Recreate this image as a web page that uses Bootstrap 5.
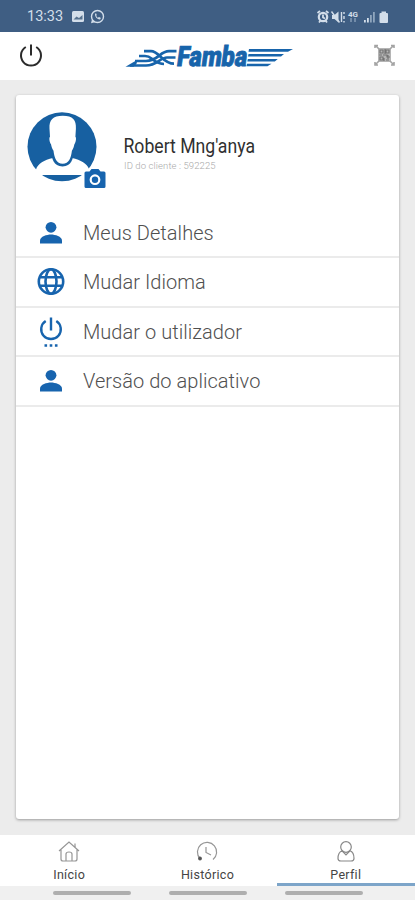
<!DOCTYPE html>
<html lang="pt">
<head>
<meta charset="utf-8">
<meta name="viewport" content="width=device-width, initial-scale=1">
<title>Famba - Perfil</title>
<link href="https://cdn.jsdelivr.net/npm/bootstrap@5.3.0/dist/css/bootstrap.min.css" rel="stylesheet">
<style>
body{font-family:Roboto,"Liberation Sans",sans-serif;height:900px;overflow:hidden;background:#ececec}
svg{display:block;flex:none;overflow:visible}
.status-bar{height:32px;background:#3f5e83;color:#d3deea;font-size:14.5px;padding:1px 25px 0 27px}
.status-time{width:44px;line-height:32px}
.app-header{height:48px;padding:0 19px}
.page-main{padding:15px 16px 16px;min-height:0}
.profile-card{border:0;border-radius:3px;box-shadow:0 1px 3px rgba(0,0,0,.35)}
.profile-head{height:113.500px;padding:16px 0 0 10px}
.client-id{font-size:9.5px;line-height:12px;color:#a8a8a8;font-weight:300;margin-top:2px;letter-spacing:.1px}
.menu-row{height:49.5px;padding:1px 0 0 20px;border:0;border-bottom:2px solid #ebebeb!important;border-radius:0!important;background:transparent}
.menu-label{font-size:20px;font-weight:300;color:#505050;margin-left:17px;letter-spacing:.04px;white-space:nowrap}
.tab-bar{height:51px}
.tab-item{padding-top:5px;color:#444;font-size:12.5px;line-height:17px;letter-spacing:.3px}
.tab-item.current{box-shadow:inset 0 -3px #7da5c9}
.tab-item svg{margin-bottom:2px}
.gesture-bar{height:14px;background:#f0f0f0;padding:5px 52px 0 53px}
.gesture-bar span{width:78px;height:4px;border-radius:2px;background:#afafaf}
</style>
</head>
<body class="d-flex flex-column">
<header class="status-bar d-flex align-items-center">
  <span class="status-time">13:33</span>
  <svg width="34" height="16" viewBox="0 0 34 16">
    <rect x="1" y="2" width="12" height="11" rx="1.500" fill="#d3deea"/><path d="M2.500 10.500l3-3 2.500 1.500 3.500-3v4.500z" fill="#57728f"/>
    <circle cx="26.500" cy="7.500" r="6" fill="none" stroke="#d3deea" stroke-width="1.400"/><path d="M20 14.300l1-4 3 3z" fill="#d3deea"/><path d="M24.200 4.500c-1 3 3 7 5.500 5.600l-.3-1.600-1.700-.5-.8.900-1.700-2 .5-.9-.5-1.600z" fill="#d3deea"/>
  </svg>
  <svg class="ms-auto" width="74" height="16" viewBox="0 0 74 16" fill="#d3deea">
    <circle cx="7" cy="8" r="4.200" fill="none" stroke="#d3deea" stroke-width="2.200"/><path d="M7 5.500v3l2 1M1.500 4l2.500-2M12.500 4l-2.500-2M3 13.500l1.500-2M11 13.500l-1.500-2" fill="none" stroke="#d3deea" stroke-width="1.800"/>
    <path d="M16 6h2.500L22.500 2.500v11L18.500 10H16z"/><path d="M15.500 2.500l8 11M25.500 3v10M28 3v2m0 2v3m0 2v1.500" stroke="#d3deea" stroke-width="1.400"/>
    <text x="32" y="7.500" font-size="8" font-weight="700" textLength="10">4G</text><path d="M35 9v4M39 9v4" stroke="#8fa5bd" stroke-width="1.300"/>
    <path d="M48 11h1.800v2.500H48zM51 9h1.800v4.500H51z"/><path d="M54 6h1.800v7.500H54zM57 3h1.800v10.500H57z" fill="#8fa5bd"/>
    <rect x="63.500" y="4" width="8.500" height="10" rx="1"/><rect x="65.500" y="2.500" width="4.500" height="2"/>
  </svg>
</header>
<nav class="app-header bg-white d-flex align-items-center justify-content-between">
  <svg width="24" height="24" viewBox="0 0 24 24" fill="none" stroke="#2b2b2b" stroke-width="2"><path d="M12 .5v11M6.800 3a10 10 0 1 0 10.400 0"/></svg>
  <svg width="168" height="26" viewBox="123 43 168 26">
    <g fill="none" stroke="#1764ab" stroke-width="2.700">
      <path d="M143 51.200h7c8 0 12 12.500 23 12.500"/>
      <path d="M138 56h6c5 0 6 2.500 9 4.500s6 3.500 10 3.500"/>
      <path d="M134 61h11c12 0 14-9.800 23-9.800h7.500"/>
      <path d="M129 65.500h16c11 0 14-8 21-8h8.500"/>
    </g>
    <path d="M124.500 66.800l12-7-1 4-3 3z" fill="#1764ab"/>
    <text transform="translate(175 66) skewX(-8)" x="0" y="0" font-size="28" font-weight="900" fill="#1764ab" stroke="#1764ab" stroke-width=".9" textLength="70" lengthAdjust="spacingAndGlyphs">Famba</text>
    <path d="M249.500 49h44l-5 2.700h-39.500zM249 54h35.500l-3 2.600h-33zM248.300 59h30l-3 2.600h-27.500zM247.500 63.700h24.500l-4 2.600h-21z" transform="translate(-1.500 0)" fill="#1764ab"/>
  </svg>
  <svg width="23" height="24" viewBox="0 0 23 24" fill="none" stroke="#888"><path d="M5 4h13v14H5z" fill="#b5b5b5" stroke="none"/><path d="M7 6h3v3H7zM13 6h3v3h-3zM7 13h3v3H7zM10 11h4v2h3M13 16h3M12 5v5M6 11h3M15 11v4M11 14v3" stroke="#737373" stroke-width="1.200"/><path d="M2 4V1.500h3M18 1.500h3V4M2 18v3h3M18 21h3v-3M3 2l3 3M20 2l-3 3M3 20l3-3M20 20l-3-3" stroke-width="1.600" stroke="#a3a3a3"/></svg>
</nav>
<main class="page-main flex-grow-1 d-flex flex-column">
  <section class="profile-card card flex-grow-1">
    <div class="profile-head d-flex">
      <svg width="82" height="80" viewBox="26 111 82 80">
        <circle cx="62" cy="146.800" r="34.500" fill="#1760a1"/>
        <path d="M26 169.500h10c2-6 8-9.500 17-11.500h19c9 2 15 5.500 17 11l9 .500v5.500H26z" fill="#fff"/>
        <path d="M51.500 152c0 6 2 14.500 11 14.500s11-8.500 11-14.500z" fill="#1760a1"/>
        <path d="M62.800 115.800c-10 0-13.800 4-13.300 13l.5 8c-1.300 1-.3 6 1 7.500.5 2.500 1.200 4.500 2.500 6.500.8 7 3 13 9.200 13s8.400-6 9.200-13c1.300-2 2-4 2.500-6.500 1.300-1.500 2.300-6.500 1-7.500l.5-8c.5-9-3.100-13-13.100-13z" fill="#fff"/>
        <path d="M84.500 173q0-1.500 1.500-1.500h3.500l2-2.500h7l2 2.500h3.500q1.500 0 1.500 1.500v13.500q0 1.500-1.500 1.500h-18q-1.500 0-1.500-1.500z" fill="#1764ae"/>
        <circle cx="95" cy="179.700" r="4.300" fill="none" stroke="#fff" stroke-width="2.200"/>
      </svg>
      <div class="ms-3">
        <svg width="140" height="47" viewBox="124 111 140 47"><text x="123.500" y="152.500" font-size="20" fill="#303030" textLength="131.500" lengthAdjust="spacingAndGlyphs">Robert Mng'anya</text></svg>
        <div class="client-id">ID do cliente : 592225</div>
      </div>
    </div>
    <div class="list-group list-group-flush">
      <div class="menu-row list-group-item d-flex align-items-center">
        <svg width="30" height="30" viewBox="0 0 30 30" fill="#1764ae"><circle cx="15" cy="9.300" r="5.400"/><path d="M4 25.500v-3c0-4 7-6 11-6s11 2 11 6v3z"/></svg>
        <span class="menu-label">Meus Detalhes</span>
      </div>
      <div class="menu-row list-group-item d-flex align-items-center">
        <svg width="30" height="30" viewBox="0 0 30 30" fill="none" stroke="#1764ae" stroke-width="2.600"><circle cx="15" cy="14.500" r="12.200"/><ellipse cx="15" cy="14.500" rx="5.500" ry="12.200"/><path d="M4 10.200h22M4 18.800h22"/></svg>
        <span class="menu-label">Mudar Idioma</span>
      </div>
      <div class="menu-row list-group-item d-flex align-items-center">
        <svg width="30" height="30" viewBox="0 0 30 30" fill="none" stroke="#1764ae" stroke-width="2.400"><path d="M15 .5v13M9.700 4a9.800 9.800 0 1 0 10.600 0"/><path d="M8.500 28.500h2.600M13.700 28.500h2.600M18.900 28.500h2.600" stroke-width="2.600"/></svg>
        <span class="menu-label">Mudar o utilizador</span>
      </div>
      <div class="menu-row list-group-item d-flex align-items-center">
        <svg width="30" height="30" viewBox="0 0 30 30" fill="#1764ae"><circle cx="15" cy="9.300" r="5.400"/><path d="M4 25.500v-3c0-4 7-6 11-6s11 2 11 6v3z"/></svg>
        <span class="menu-label">Versão do aplicativo</span>
      </div>
    </div>
  </section>
</main>
<nav class="tab-bar row g-0 bg-white">
  <div class="tab-item col d-flex flex-column align-items-center">
    <svg width="24" height="24" viewBox="0 0 24 24" fill="none" stroke="#969696" stroke-width="1.200"><path d="M2 11L12 2l10 9M4 9.500V19q0 2 2 2h12q2 0 2-2V9.500M9 21v-7q0-2 3-2t3 2v7M18 7V3.500"/></svg>
    <span>Início</span>
  </div>
  <div class="tab-item col d-flex flex-column align-items-center">
    <svg width="24" height="24" viewBox="0 0 24 24" fill="none" stroke="#969696" stroke-width="1.200"><path d="M5 18.500A9.600 9.600 0 1 1 18 19.500M11 7v5.500l5 2.500"/><circle cx="5" cy="18.500" r="1.300" fill="#555" stroke="#555"/></svg>
    <span>Histórico</span>
  </div>
  <div class="tab-item current col d-flex flex-column align-items-center">
    <svg width="24" height="24" viewBox="0 0 24 24" fill="none" stroke="#888" stroke-width="1.200"><circle cx="12" cy="7" r="5.300"/><path d="M8 10.800C5 12 4 15 4 18.500Q4 21 7 21h10q3 0 3-2.500c0-3.500-1-6.700-4-7.700L12 15z"/></svg>
    <span>Perfil</span>
  </div>
</nav>
<footer class="gesture-bar d-flex justify-content-between"><span></span><span></span><span></span></footer>
<script src="https://cdn.jsdelivr.net/npm/bootstrap@5.3.0/dist/js/bootstrap.bundle.min.js"></script>
</body>
</html>
